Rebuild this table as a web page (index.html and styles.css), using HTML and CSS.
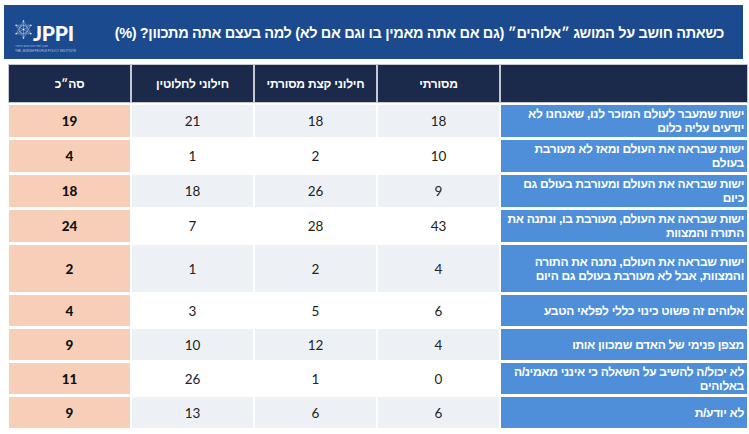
FILE: index.html
```html
<!DOCTYPE html>
<html lang="he" dir="rtl">
<head>
<meta charset="utf-8">
<title>JPPI – אלוהים</title>
<link rel="stylesheet" href="styles.css">
</head>
<body>
<header class="band">
  <h1 class="title">כשאתה חושב על המושג ״אלוהים״ (גם אם אתה מאמין בו וגם אם לא) למה בעצם אתה מתכוון? (%)</h1>
  <div class="brand" dir="ltr">
    <div class="brand-top">
      <svg class="star" viewBox="0 0 40 40" width="19" height="19" aria-hidden="true">
        <g fill="none" stroke="#b9c8e0" stroke-width="1" stroke-linejoin="round">
          <polygon points="20,2 35.6,29 4.4,29"/>
          <polygon points="20,38 4.4,11 35.6,11"/>
          <line x1="20" y1="2" x2="20" y2="38"/>
          <line x1="4.4" y1="11" x2="35.6" y2="29"/>
          <line x1="4.4" y1="29" x2="35.6" y2="11"/>
          <polygon points="20,11 27.8,15.5 27.8,24.5 20,29 12.2,24.5 12.2,15.5"/>
        </g>
        <g fill="#ffffff">
          <circle cx="20" cy="2" r="1.5"/><circle cx="35.6" cy="29" r="1.5"/><circle cx="4.4" cy="29" r="1.5"/>
          <circle cx="20" cy="38" r="1.5"/><circle cx="4.4" cy="11" r="1.5"/><circle cx="35.6" cy="11" r="1.5"/>
          <circle cx="20" cy="20" r="1.7"/>
        </g>
      </svg>
      <span class="jppi">JPPI</span>
    </div>
    <div class="sub" dir="rtl">מכון למדיניות העם היהודי</div>
    <div class="sub">THE JEWISH PEOPLE POLICY INSTITUTE</div>
  </div>
</header>

<table class="grid">
  <colgroup>
    <col class="c-label"><col class="c-num"><col class="c-num"><col class="c-num"><col class="c-num">
  </colgroup>
  <thead>
    <tr>
      <th></th>
      <th>מסורתי</th>
      <th>חילוני קצת מסורתי</th>
      <th>חילוני לחלוטין</th>
      <th>סה״כ</th>
    </tr>
  </thead>
  <tbody>
    <tr class="odd h32">
      <td class="label">ישות שמעבר לעולם המוכר לנו, שאנחנו לא יודעים עליה כלום</td>
      <td>18</td><td>18</td><td>21</td><td class="total">19</td>
    </tr>
    <tr class="even h32">
      <td class="label">ישות שבראה את העולם ומאז לא מעורבת בעולם</td>
      <td>10</td><td>2</td><td>1</td><td class="total">4</td>
    </tr>
    <tr class="odd h32">
      <td class="label">ישות שבראה את העולם ומעורבת בעולם גם כיום</td>
      <td>9</td><td>26</td><td>18</td><td class="total">18</td>
    </tr>
    <tr class="even h32">
      <td class="label">ישות שבראה את העולם, מעורבת בו, ונתנה את התורה והמצוות</td>
      <td>43</td><td>28</td><td>7</td><td class="total">24</td>
    </tr>
    <tr class="odd h47">
      <td class="label">ישות שבראה את העולם, נתנה את התורה והמצוות, אבל לא מעורבת בעולם גם היום</td>
      <td>4</td><td>2</td><td>1</td><td class="total">2</td>
    </tr>
    <tr class="even h31">
      <td class="label">אלוהים זה פשוט כינוי כללי לפלאי הטבע</td>
      <td>6</td><td>5</td><td>3</td><td class="total">4</td>
    </tr>
    <tr class="odd h31">
      <td class="label">מצפן פנימי של האדם שמכוון אותו</td>
      <td>4</td><td>12</td><td>10</td><td class="total">9</td>
    </tr>
    <tr class="even h31">
      <td class="label">לא יכול/ה להשיב על השאלה כי אינני מאמינ/ה באלוהים</td>
      <td>0</td><td>1</td><td>26</td><td class="total">11</td>
    </tr>
    <tr class="odd h31">
      <td class="label">לא יודע/ת</td>
      <td>6</td><td>6</td><td>13</td><td class="total">9</td>
    </tr>
  </tbody>
</table>
</body>
</html>
```
FILE: styles.css
```css
html, body {
  margin: 0;
  padding: 0;
  background: #ffffff;
}
body {
  font-family: "Liberation Sans", Arial, "DejaVu Sans", sans-serif;
  color: #1f2328;
  width: 749px;
  height: 434px;
  overflow: hidden;
}

/* ---------- title band ---------- */
.band {
  margin: 5px 6px 0 4px;
  height: 54px;
  background: #1c4a8f;
  display: flex;
  align-items: center;
  justify-content: space-between;
  padding: 0 19px 0 10px;
  box-sizing: border-box;
}
.title {
  margin: 0;
  color: #ffffff;
  font-size: 14.5px;
  letter-spacing: -0.35px;
  font-weight: bold;
  line-height: 18px;
  white-space: nowrap;
  padding-top: 1px;
}
.brand {
  align-self: flex-start;
  display: flex;
  flex-direction: column;
  align-items: flex-start;
  margin-top: 15px;
}
.brand-top {
  display: flex;
  align-items: flex-end;
  gap: 0;
  height: 20px;
}
.star {
  display: block;
  margin-bottom: 1px;
}
.jppi {
  color: #ffffff;
  font-family: "Lato", "Liberation Sans", sans-serif;
  font-weight: 900;
  font-size: 21px;
  line-height: 15px;
  letter-spacing: -0.2px;
}
.sub {
  color: #b7c6de;
  font-size: 3.1px;
  line-height: 4.5px;
  white-space: nowrap;
  margin-left: 1px;
}
.brand-top + .sub {
  margin-top: 4px;
}

/* ---------- table ---------- */
.grid {
  margin: 3px 0 0 3px;
  width: 742px;
  table-layout: fixed;
  border-collapse: separate;
  border-spacing: 2px 3px;
}
.c-label { width: 246px; }
.c-num { width: 121px; }

.grid th {
  height: 37px;
  padding: 0;
  background: #1b2a4b;
  color: #ffffff;
  font-size: 12px;
  letter-spacing: -0.2px;
  font-weight: bold;
  text-align: center;
  box-shadow: 0 0 0 1px #c3c8d1;
}
.grid td {
  padding: 0;
  text-align: center;
  vertical-align: middle;
  font-family: "Lato", "Liberation Sans", sans-serif;
  font-size: 13.5px;
  color: #222222;
}
.odd td { background: #edf1f6; }
.even td { background: #ffffff; }

.h32 td { height: 32px; }
.h31 td { height: 31px; }
.h47 td { height: 47px; }

.grid td.label {
  background: #4f8fd9;
  color: #ffffff;
  font-family: "Liberation Sans", Arial, sans-serif;
  font-weight: bold;
  font-size: 12px;
  letter-spacing: -0.3px;
  line-height: 14px;
  text-align: right;
  padding: 0 3px 0 5px;
}
.grid td.total {
  background: #f7cfb8;
  font-weight: 900;
  color: #111111;
}
```
